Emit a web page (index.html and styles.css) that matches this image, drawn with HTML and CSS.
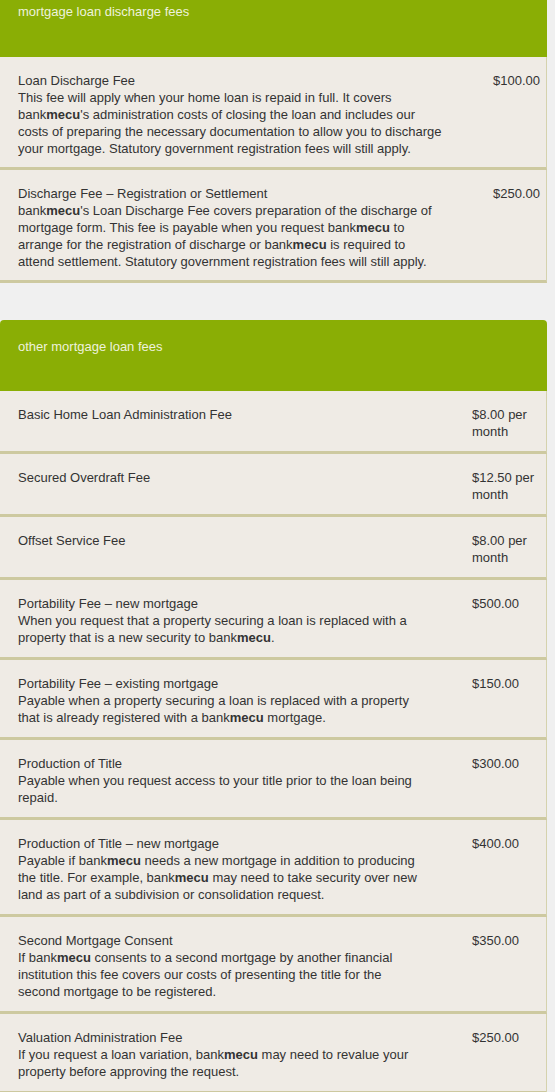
FILE: index.html
```html
<!DOCTYPE html>
<html lang="en">
<head>
  <meta charset="UTF-8" />
  <title>Mortgage Loan Fees</title>
  <link rel="stylesheet" href="styles.css">
</head>
<body>

  <div class="page">

    <!-- Discharge fees -->
    <section class="fee-table discharge">
      <h2 class="fee-head">mortgage loan discharge fees</h2>

      <div class="fee-row">
        <div class="fee-desc">
          Loan Discharge Fee<br>
          This fee will apply when your home loan is repaid in full. It covers<br>
          bank<b>mecu</b>'s administration costs of closing the loan and includes our<br>
          costs of preparing the necessary documentation to allow you to discharge<br>
          your mortgage. Statutory government registration fees will still apply.
        </div>
        <div class="fee-price">$100.00</div>
      </div>

      <div class="fee-row">
        <div class="fee-desc">
          Discharge Fee – Registration or Settlement<br>
          bank<b>mecu</b>'s Loan Discharge Fee covers preparation of the discharge of<br>
          mortgage form. This fee is payable when you request bank<b>mecu</b> to<br>
          arrange for the registration of discharge or bank<b>mecu</b> is required to<br>
          attend settlement. Statutory government registration fees will still apply.
        </div>
        <div class="fee-price">$250.00</div>
      </div>
    </section>

    <!-- Other fees -->
    <section class="fee-table other">
      <h2 class="fee-head">other mortgage loan fees</h2>

      <div class="fee-row">
        <div class="fee-desc">Basic Home Loan Administration Fee</div>
        <div class="fee-price">$8.00 per month</div>
      </div>

      <div class="fee-row">
        <div class="fee-desc">Secured Overdraft Fee</div>
        <div class="fee-price">$12.50 per month</div>
      </div>

      <div class="fee-row">
        <div class="fee-desc">Offset Service Fee</div>
        <div class="fee-price">$8.00 per month</div>
      </div>

      <div class="fee-row">
        <div class="fee-desc">
          Portability Fee – new mortgage<br>
          When you request that a property securing a loan is replaced with a<br>
          property that is a new security to bank<b>mecu</b>.
        </div>
        <div class="fee-price">$500.00</div>
      </div>

      <div class="fee-row">
        <div class="fee-desc">
          Portability Fee – existing mortgage<br>
          Payable when a property securing a loan is replaced with a property<br>
          that is already registered with a bank<b>mecu</b> mortgage.
        </div>
        <div class="fee-price">$150.00</div>
      </div>

      <div class="fee-row">
        <div class="fee-desc">
          Production of Title<br>
          Payable when you request access to your title prior to the loan being<br>
          repaid.
        </div>
        <div class="fee-price">$300.00</div>
      </div>

      <div class="fee-row">
        <div class="fee-desc">
          Production of Title – new mortgage<br>
          Payable if bank<b>mecu</b> needs a new mortgage in addition to producing<br>
          the title. For example, bank<b>mecu</b> may need to take security over new<br>
          land as part of a subdivision or consolidation request.
        </div>
        <div class="fee-price">$400.00</div>
      </div>

      <div class="fee-row">
        <div class="fee-desc">
          Second Mortgage Consent<br>
          If bank<b>mecu</b> consents to a second mortgage by another financial<br>
          institution this fee covers our costs of presenting the title for the<br>
          second mortgage to be registered.
        </div>
        <div class="fee-price">$350.00</div>
      </div>

      <div class="fee-row">
        <div class="fee-desc">
          Valuation Administration Fee<br>
          If you request a loan variation, bank<b>mecu</b> may need to revalue your<br>
          property before approving the request.
        </div>
        <div class="fee-price">$250.00</div>
      </div>
    </section>

  </div>

</body>
</html>
```

FILE: styles.css
```css
body {
  margin: 0;
  background: #f0f0f0;
  font-family: "Liberation Sans", Arial, sans-serif;
  font-size: 13px;
  line-height: 17px;
  color: #333;
}
.page {
  width: 547px;
  margin-top: -15px;
}
.fee-table {
  margin-bottom: 37px;
}
.fee-head {
  margin: 0;
  height: 71px;
  box-sizing: border-box;
  padding: 18px 18px 0;
  background: #8aae05;
  border-radius: 4px 4px 0 0;
  color: #eef2dc;
  font-size: 13px;
  font-weight: normal;
}
.discharge .fee-head {
  height: 72px;
}
.fee-row {
  display: grid;
  grid-template-columns: 440px 52px;
  column-gap: 35px;
  padding: 15px 0 11px 18px;
  background: #efebe5;
  border-right: 1px solid #d5d2ad;
  border-bottom: 3px solid #cdc9a0;
}
.discharge .fee-row {
  padding-bottom: 10px;
}
.other .fee-row {
  grid-template-columns: 440px 72px;
  column-gap: 14px;
}
.fee-desc b {
  font-weight: bold;
}
```
